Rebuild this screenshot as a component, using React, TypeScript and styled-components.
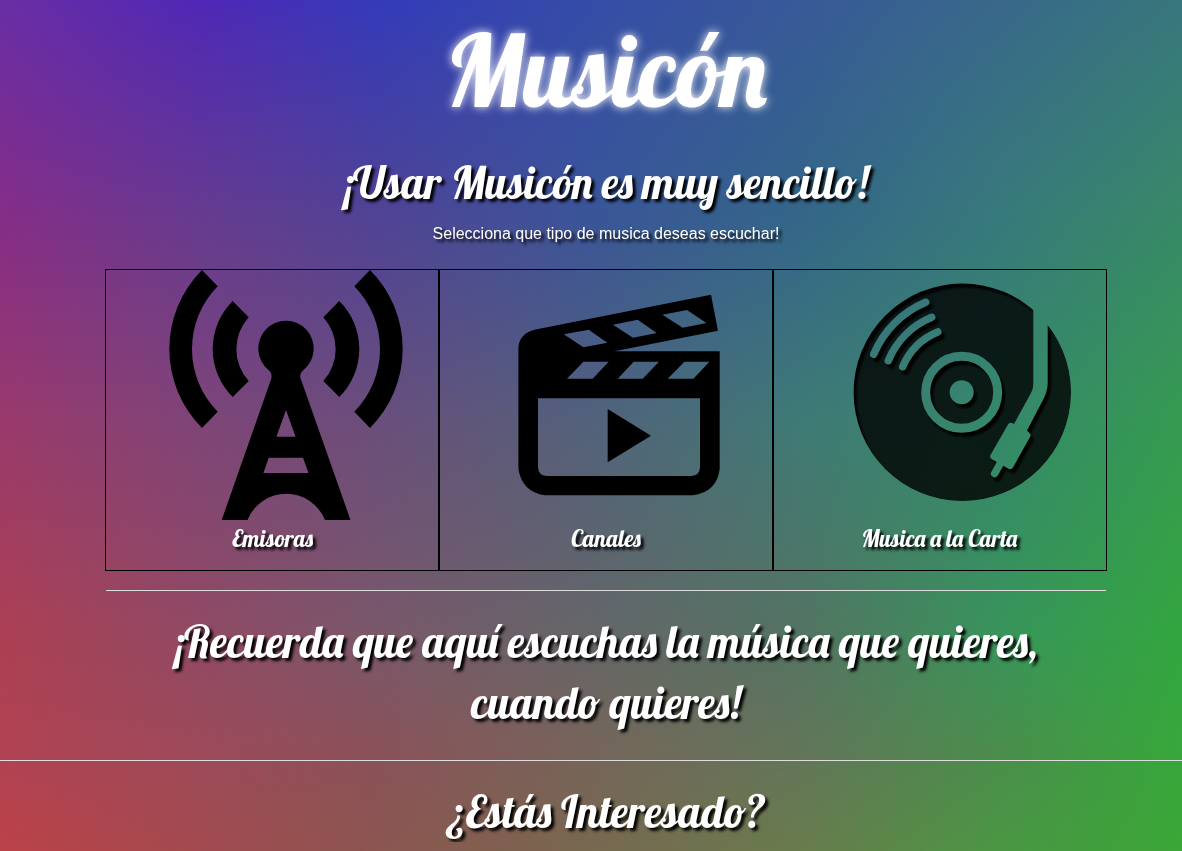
import React from 'react';
import styled, { createGlobalStyle } from 'styled-components';

const GlobalStyle = createGlobalStyle`
  *, *::before, *::after { box-sizing: border-box; }
  html { min-height: 100%; overflow: hidden; }
  body {
    margin: 0;
    color: #fff;
    font-family: "Liberation Sans", Arial, sans-serif;
    font-size: 16px;
    line-height: 24px;
  }
`;

const script = `Lobster, "Liberation Serif", serif`;

/* Horizontal colour bands; each one fades in from the band above it. */
const bands = [
  { at: 0, colors: ['#6a2ea4', '#5028b6', '#343bba', '#364da8', '#385a98', '#39698a', '#38777d'] },
  { at: 25, colors: ['#852d88', '#653b90', '#504395', '#3a5599', '#346689', '#387a7b', '#388968'] },
  { at: 50, colors: ['#9a3a6b', '#7f4577', '#6a4f7b', '#53627a', '#3f7b75', '#35896a', '#369b50'] },
  { at: 75, colors: ['#ad4053', '#914a64', '#7a586a', '#656668', '#547462', '#38955a', '#33a63f'] },
  { at: 88, colors: ['#b14253', '#9c4a5a', '#8a525a', '#76655a', '#62765a', '#4a8e4c', '#36a83c'] },
  { at: 100, colors: ['#bc4248', '#a24a4e', '#8b564f', '#786850', '#687c4c', '#4a9743', '#3ba636'] },
];
const stops = [0, 17, 32, 50, 68, 85, 100];

const Backdrop = styled.div`
  position: fixed;
  inset: 0;
  z-index: -1;
`;

const Band = styled.div<{ $colors: string[]; $from: number; $to: number }>`
  position: absolute;
  inset: 0;
  background: linear-gradient(
    to right,
    ${(p) => p.$colors.map((c, i) => `${c} ${stops[i]}%`).join(', ')}
  );
  mask-image: ${(p) =>
    p.$to === 0 ? 'none' : `linear-gradient(to bottom, transparent ${p.$from}%, #000 ${p.$to}%)`};
`;

const Centered = styled.div`
  padding-left: 30px;
  text-align: center;
`;

const Title = styled.h1`
  margin: 0;
  padding: 8px 0 20px;
  font: normal 100px/124px ${script};
  text-shadow: 0 0 10px #fff;
`;

const Container = styled.main`
  width: 100%;
  max-width: 1000px;
  margin: 0 auto;
`;

const Heading = styled.h2`
  margin: 0;
  padding: 0 16px;
  font: normal 44px/61px ${script};
  text-shadow: 3px 3px 3px #000;
`;

const Lead = styled.p`
  margin: 0;
  padding: 9px 0 24px;
  text-shadow: 3px 3px 3px #000;
`;

const Options = styled.nav`
  display: grid;
  grid-template-columns: repeat(3, 1fr);
`;

const Option = styled.a`
  display: flex;
  flex-direction: column;
  align-items: center;
  height: 300px;
  outline: 1px solid #000;
  color: #fff;
  text-decoration: none;
`;

const Picture = styled.span`
  display: block;
  height: 250px;
  padding-left: 26px;
  svg { display: block; }
`;

const OptionName = styled.span`
  padding-top: 3px;
  font: normal 23px/32px ${script};
  text-shadow: 3px 3px 3px #000;
`;

const Rule = styled.hr<{ $top: number; $bottom: number }>`
  height: 1px;
  margin: ${(p) => p.$top}px 0 ${(p) => p.$bottom}px;
  border: 0;
  background: #dedede;
`;

const Tower = () => (
  <svg width="250" height="250" viewBox="0 0 250 250" aria-hidden="true">
    <path id="waves" d="M41 0 56.700 16.300A89.300 89.300 0 0 0 56.700 141.700L41 158A111.800 111.800 0 0 1 41 0ZM71.700 31 87.700 47.300A47.200 47.200 0 0 0 87.700 111L71.700 127A67.600 67.600 0 0 1 71.700 31Z" />
    <use href="#waves" transform="matrix(-1 0 0 1 250 0)" />
    <path
      fillRule="evenodd"
      d="M107.500 100A27.700 27.700 0 1 1 142.500 100C139 103 138.600 106 140 109.500L189.500 250H164A41.800 41.800 0 0 0 86.500 250H60.700L110 109.500C111 106 111 103 107.500 100ZM125 140 115.400 166.700H134.600ZM107.700 187.700 102.400 203H147.500L142 187.700Z"
    />
  </svg>
);

const Clapper = () => (
  <svg width="250" height="250" viewBox="0 0 250 250" aria-hidden="true">
    <path
      fillRule="evenodd"
      d="M217 24.700 224 60.700 120.400 81.300H225.700V199Q223 222 198.700 225.300H51Q28 222 24.400 199V78Q25 64 40.400 59.700ZM69.700 64.300 94.700 59.700 113.400 72.700 89.400 77.300ZM119 54.700 143.700 49.700 162.700 63 139 67.700ZM168.400 44.700 193 40 212.400 53 188.700 57.700ZM89.400 91.700H114.700L98.700 108.700H73ZM139.700 91.700H165L148.700 108.700H123.700ZM190.400 91.700H215.400L199.400 108.700H173.700ZM44 128.300V197.500Q44.500 205.500 52.500 206H197.500Q205.500 205.500 206 197.500V128.300Z"
    />
    <path d="M113.700 139 157 165.700 113.700 192.300Z" />
  </svg>
);

const Turntable = () => (
  <svg width="250" height="250" viewBox="-1 0 250 250" aria-hidden="true">
    <defs>
      <g id="details">
        <g fill="none" stroke="#000" strokeLinecap="round" strokeWidth="7.500">
          <path d="M45.700 84.300A97 97 0 0 1 97.700 32.300M60.300 90.700A80.500 80.500 0 0 1 103.700 47.300M74.700 96.700A65 65 0 0 1 109.700 62M173.300 191.700 166.700 203.500" />
        </g>
        <circle cx="133.700" cy="122.300" r="36" fill="none" stroke="#000" strokeWidth="9" />
        <circle cx="133.700" cy="122.300" r="12" />
        <path d="M205.300 0H219.700V113Q219.500 121 216 128L199 160.500 202.300 164Q203 165.500 202 167L185 197.500Q183.500 200 181 199L163.500 189Q161.500 187.500 162.500 185L180 154.500Q181.500 152 184 153L186 154L203 123Q205.300 118.500 205.300 114Z" />
      </g>
      <mask id="record" maskUnits="userSpaceOnUse" x="0" y="0" width="250" height="250">
        <circle cx="134.300" cy="122.300" r="108.700" fill="#fff" />
        <use href="#details" />
      </mask>
      <filter id="soften" x="-10%" y="-10%" width="120%" height="120%">
        <feGaussianBlur stdDeviation="1" />
      </filter>
    </defs>
    <g mask="url(#record)">
      <circle cx="134.300" cy="122.300" r="109" fillOpacity=".8" />
      <g filter="url(#soften)" transform="translate(3 4)">
        <use href="#details" />
        <path fillRule="evenodd" d="M-20-20H270V270H-20ZM134.300 13.600A108.700 108.700 0 1 0 134.300 231A108.700 108.700 0 1 0 134.300 13.600Z" />
      </g>
    </g>
  </svg>
);

const options = [
  { name: 'Emisoras', picture: <Tower /> },
  { name: 'Canales', picture: <Clapper /> },
  { name: 'Musica a la Carta', picture: <Turntable /> },
];

export default function App() {
  return (
    <>
      <GlobalStyle />
      <Backdrop>
        {bands.map((band, i) => (
          <Band key={band.at} $colors={band.colors} $from={i ? bands[i - 1].at : 0} $to={band.at} />
        ))}
      </Backdrop>
      <Centered>
        <Title>Musicón</Title>
        <Container>
          <Heading>¡Usar Musicón es muy sencillo!</Heading>
          <Lead>Selecciona que tipo de musica deseas escuchar!</Lead>
          <Options>
            {options.map((o) => (
              <Option href="#" key={o.name}>
                <Picture>{o.picture}</Picture>
                <OptionName>{o.name}</OptionName>
              </Option>
            ))}
          </Options>
          <Rule $top={20} $bottom={20} />
          <Heading>¡Recuerda que aquí escuchas la música que quieres, cuando quieres!</Heading>
        </Container>
      </Centered>
      <Rule $top={27} $bottom={20} />
      <Centered>
        <Heading>¿Estás Interesado?</Heading>
      </Centered>
    </>
  );
}
